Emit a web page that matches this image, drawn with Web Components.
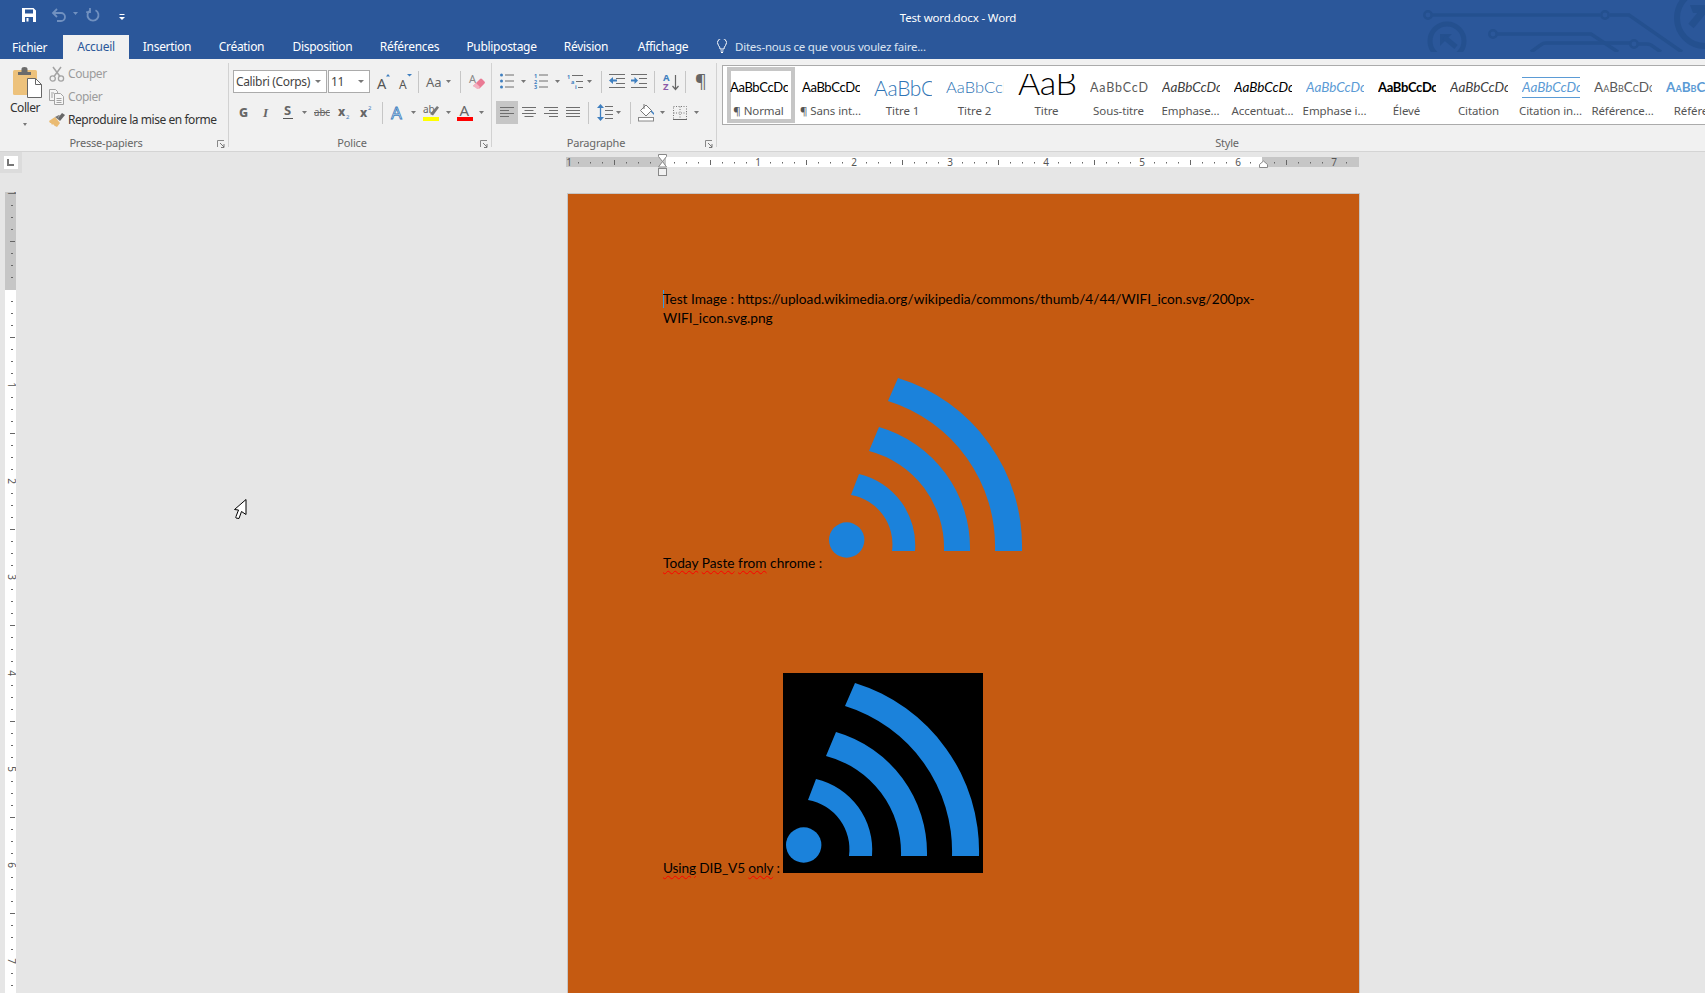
<!DOCTYPE html>
<html lang="fr"><head><meta charset="utf-8"><title>Test word.docx - Word</title>
<style>html,body{margin:0;height:100%;overflow:hidden;background:#e6e6e6}</style></head>
<body>
<word-app>
  <title-bar slot="title">Test word.docx - Word</title-bar>
  <ribbon-tabs slot="tabs">
    <ribbon-tab w="63" pad="12" first>Fichier</ribbon-tab>
    <ribbon-tab w="66" active>Accueil</ribbon-tab>
    <ribbon-tab w="76">Insertion</ribbon-tab>
    <ribbon-tab w="73">Création</ribbon-tab>
    <ribbon-tab w="89">Disposition</ribbon-tab>
    <ribbon-tab w="85">Références</ribbon-tab>
    <ribbon-tab w="99">Publipostage</ribbon-tab>
    <ribbon-tab w="70">Révision</ribbon-tab>
    <ribbon-tab w="84">Affichage</ribbon-tab>
    <tell-me>Dites-nous ce que vous voulez faire...</tell-me>
  </ribbon-tabs>
  <word-ribbon slot="ribbon">
    <rb-group w="229" label="Presse-papiers">
      <clip-board></clip-board>
    </rb-group>
    <rb-group w="263" label="Police">
      <rb-rows>
        <rb-row>
          <rb-combo m="4" w="94">Calibri (Corps)</rb-combo><rb-combo m="1" w="42">11</rb-combo>
          <rb-icon n="grow" m="7"></rb-icon><rb-icon n="shrink" m="8"></rb-icon><rb-sep m="6"></rb-sep>
          <rb-icon n="case" m="7"></rb-icon><rb-icon n="arr" m="3.5"></rb-icon><rb-sep m="9.5"></rb-sep><rb-icon n="eraser" m="8"></rb-icon>
        </rb-row>
        <rb-row>
          <rb-icon n="bold" m="8"></rb-icon><rb-icon n="ital" m="11"></rb-icon><rb-icon n="under" m="10"></rb-icon><rb-icon n="arr" m="7.5"></rb-icon>
          <rb-icon n="strike" m="7.5"></rb-icon><rb-icon n="sub" m="8"></rb-icon><rb-icon n="sup" m="10"></rb-icon><rb-sep m="10"></rb-sep>
          <rb-icon n="effect" m="8"></rb-icon><rb-icon n="arr" m="6.5"></rb-icon><rb-icon n="hilite" m="7.5"></rb-icon><rb-icon n="arr" m="6.5"></rb-icon>
          <rb-icon n="fcolor" m="6.5"></rb-icon><rb-icon n="arr" m="5.5"></rb-icon>
        </rb-row>
      </rb-rows>
    </rb-group>
    <rb-group w="225" label="Paragraphe">
      <rb-rows>
        <rb-row>
          <rb-icon n="bullets" m="8"></rb-icon><rb-icon n="arr" m="7"></rb-icon><rb-icon n="numbers" m="8"></rb-icon><rb-icon n="arr" m="7"></rb-icon>
          <rb-icon n="multi" m="7"></rb-icon><rb-icon n="arr" m="4"></rb-icon><rb-sep m="9"></rb-sep>
          <rb-icon n="outdent" m="7"></rb-icon><rb-icon n="indent" m="6"></rb-icon><rb-sep m="7"></rb-sep>
          <rb-icon n="sort" m="8"></rb-icon><rb-sep m="6"></rb-sep><rb-icon n="pilcrow" m="9"></rb-icon>
        </rb-row>
        <rb-row>
          <rb-icon n="aleft" m="4" on></rb-icon><rb-icon n="acenter" m="4"></rb-icon><rb-icon n="aright" m="8"></rb-icon><rb-icon n="ajust" m="8"></rb-icon><rb-sep m="8"></rb-sep>
          <rb-icon n="spacing" m="8"></rb-icon><rb-icon n="arr" m="3"></rb-icon><rb-sep m="9"></rb-sep>
          <rb-icon n="fill" m="7"></rb-icon><rb-icon n="arr" m="5"></rb-icon><rb-icon n="borders" m="8"></rb-icon><rb-icon n="arr" m="7"></rb-icon>
        </rb-row>
      </rb-rows>
    </rb-group>
    <rb-group w="1036" label="Style" plain>
      <style-gallery>
        <style-item label="¶ Normal" selected s="color:#000;font-size:13px;letter-spacing:-.35px">AaBbCcDc</style-item>
        <style-item label="¶ Sans int..." s="color:#000;font-size:13px;letter-spacing:-.35px">AaBbCcDc</style-item>
        <style-item label="Titre 1" s="color:#2e74b5;font-size:21px;font-weight:300;letter-spacing:-.3px">AaBbCc</style-item>
        <style-item label="Titre 2" s="color:#2e74b5;font-size:16.500px;font-weight:300">AaBbCcD</style-item>
        <style-item label="Titre" s="color:#000;font-size:34px;font-weight:300;line-height:16px;letter-spacing:-.5px">AaB</style-item>
        <style-item label="Sous-titre" s="color:#5a5a5a;font-size:12.500px;letter-spacing:.8px">AaBbCcD</style-item>
        <style-item label="Emphase..." s="color:#404040;font-size:13.500px;font-style:italic">AaBbCcDc</style-item>
        <style-item label="Accentuat..." s="color:#000;font-size:13.500px;font-style:italic">AaBbCcDc</style-item>
        <style-item label="Emphase i..." s="color:#5b9bd5;font-size:13.500px;font-style:italic">AaBbCcDc</style-item>
        <style-item label="Élevé" s="color:#000;font-size:13px;font-weight:700;letter-spacing:-.35px">AaBbCcDc</style-item>
        <style-item label="Citation" s="color:#404040;font-size:13.500px;font-style:italic">AaBbCcDc</style-item>
        <style-item label="Citation in..." lines s="color:#5b9bd5;font-size:13.500px;font-style:italic">AaBbCcDc</style-item>
        <style-item label="Référence..." s="color:#5a5a5a;font-size:13.500px;font-variant:small-caps">AaBbCcDc</style-item>
        <style-item label="Référen" s="color:#5b9bd5;font-size:13.500px;font-variant:small-caps;font-weight:700">AaBbCcDc</style-item>
      </style-gallery>
    </rb-group>
  </word-ribbon>
  <doc-area slot="doc">
    <doc-page>
      <doc-para><text-caret></text-caret>Test Image : https://upload.wikimedia.org/wikipedia/commons/thumb/4/44/WIFI_icon.svg/200px-WIFI_icon.svg.png</doc-para>
      <doc-para gap="41"><spell-err>Today</spell-err> <spell-err>Paste</spell-err> <spell-err>from</spell-err> chrome : <wifi-image></wifi-image></doc-para>
      <doc-para gap="101" ls="-.15"><spell-err>Using</spell-err> DIB_V5 <spell-err>only</spell-err> : <wifi-image black></wifi-image></doc-para>
    </doc-page>
  </doc-area>
</word-app>
<script>
const UI='"Noto Sans","Open Sans",sans-serif';
const DOC='Lato,"Liberation Sans",sans-serif';
const mk=(el,css,html)=>{const r=el.attachShadow({mode:'open'});r.innerHTML=`<style>${css}</style>${html}`;return r};
const G='#6e6e6e',B='#3f7fbf';
const hl=(x1,x2,ys,c=G,sw=1)=>ys.map(y=>`<path d="M${x1} ${y+.5}H${x2}" stroke="${c}" stroke-width="${sw}"/>`).join('');
const lr=(x1,x2,rows)=>rows.map(([a,b,y])=>`<path d="M${a} ${y+.5}H${b}" stroke="${G}"/>`).join('');
const tx=(x,y,s,t,extra='')=>`<text x="${x}" y="${y}" font-size="${s}" ${extra}>${t}</text>`;
const ICONS={
 arr:[5,3,`<path d="M0 0h5L2.500 3z" fill="#777"/>`],
 grow:[14,18,`<path d="M9 3.500L11 1l2 2.500z" fill="${B}"/>`+tx(0,16,14.500,'A','fill="#555"')],
 shrink:[13,18,`<path d="M8 1h5l-2.500 2.500z" fill="${B}"/>`+tx(0,16,12,'A','fill="#555"')],
 case:[16,18,tx(0,14,13,'Aa','fill="#666"')],
 eraser:[16,18,tx(0,10,11,'A','fill="#888"')+`<path d="M4 13l7-7q1-1 2 0l2.500 2.500q1 1 0 2l-4.500 4.500q-1 1-2 0l-5-2z" fill="#ea7a94"/><path d="M4 13l3-3 4 4-1.500 1.500q-1 1-2 0z" fill="#f3b2c2"/>`],
 bold:[12,16,tx(2,12,12.500,'G','fill="#666" font-weight="800"')],
 ital:[12,16,tx(3,12,13,'I','fill="#666" font-style="italic" font-family="Liberation Serif" font-weight="700"')],
 under:[12,18,tx(2,11,13,'S','fill="#666" font-weight="700"')+`<path d="M1 14.500h10" stroke="#555"/>`],
 strike:[16,16,tx(0,11,11,'abc','fill="#666" textLength="16" lengthAdjust="spacingAndGlyphs"')+`<path d="M0 7.500h16" stroke="#666"/>`],
 sub:[12,16,tx(0,11,12,'x','fill="#666" font-weight="800"')+tx(8,14,6,'2',`fill="${B}"`)],
 sup:[12,16,tx(0,12,12,'x','fill="#666" font-weight="800"')+tx(8,5,6,'2',`fill="${B}"`)],
 effect:[13,18,tx(0,15,17,'A',`fill="#e6eff8" stroke="${B}" stroke-width=".8"`)],
 hilite:[16,18,tx(0,9,10,'ab','fill="#666"')+`<path d="M7 10L14 2l2 1.500-6 8z" fill="#777"/><rect y="13" width="16" height="4" fill="#ff0"/>`],
 fcolor:[16,18,tx(2.500,12,15,'A','fill="#666"')+`<rect y="13" width="16" height="4" fill="#f00"/>`],
 bullets:[14,15,[1,7,13].map(y=>`<circle cx="1.500" cy="${y}" r="1.500" fill="${B}"/>`).join('')+hl(5,14,[0.500,6.500,12.500])],
 numbers:[14,15,tx(0,4,5.500,'1',`fill="${B}" font-weight="700"`)+tx(0,10,5.500,'2',`fill="${B}" font-weight="700"`)+tx(0,15,5.500,'3',`fill="${B}" font-weight="700"`)+hl(5,14,[0.500,6.500,12.500])],
 multi:[16,15,tx(0,5,5.500,'1',`fill="${B}" font-weight="700"`)+tx(4,10,5.500,'a',`fill="${B}" font-weight="700"`)+tx(8,15,5.500,'i',`fill="${B}" font-weight="700"`)+lr(0,0,[[5,16,1],[9,16,7],[11,16,13]])],
 outdent:[16,15,lr(0,0,[[0,16,0],[7,16,4],[7,16,9],[0,16,13]])+`<path d="M0 6.500L4 3v2.500h4v2H4V10z" fill="${B}"/>`],
 indent:[16,15,lr(0,0,[[0,16,0],[8,16,4],[8,16,9],[0,16,13]])+`<path d="M7 6.500L3.500 3v2.500H0v2h3.500V10z" fill="${B}"/>`],
 sort:[16,18,tx(0,8,9.500,'A',`fill="${B}" font-weight="700"`)+tx(0,17,9.500,'Z','fill="#8a5aa8" font-weight="700"')+`<path d="M12.500 2v14M9.500 13l3 3.500 3-3.500" fill="none" stroke="#666" stroke-width="1.200"/>`],
 pilcrow:[12,20,tx(0,16,18,'¶','fill="#666"')],
 aleft:[14,11,lr(0,0,[[0,14,0],[0,9,3],[0,14,6],[0,9,9]])],
 acenter:[14,11,lr(0,0,[[0,14,0],[2.500,11.500,3],[0,14,6],[2.500,11.500,9]])],
 aright:[14,11,lr(0,0,[[0,14,0],[5,14,3],[0,14,6],[5,14,9]])],
 ajust:[14,11,lr(0,0,[[0,14,0],[0,14,3],[0,14,6],[0,14,9]])],
 spacing:[16,17,`<path d="M3.500 3v11" stroke="${B}" stroke-width="1.300"/><path d="M0 4L3.500 0 7 4zM0 13l3.500 4L7 13z" fill="${B}"/>`+lr(0,0,[[8,16,2],[8,16,6],[8,16,10],[8,16,14]])],
 fill:[17,18,`<path d="M8 1l5.500 5.500L8 12 2.500 6.500z" fill="#fff" stroke="#777"/><path d="M13 6l3 3v2l-3-3z" fill="${B}"/><path d="M6 0v5" stroke="#777"/><rect x=".5" y="13.500" width="15" height="3.500" fill="#fff" stroke="#888"/>`],
 borders:[14,14,`<path d="M.5 .5h13v13H.5zM7 .5v13M.5 7h13" fill="none" stroke="#777" stroke-dasharray="1 1.500"/><path d="M0 13.500h14" stroke="#666"/>`],
};
class RbIcon extends HTMLElement{connectedCallback(){const n=this.getAttribute('n');const [w,h,c]=ICONS[n];const on=this.hasAttribute('on');
 mk(this,`:host{display:flex;flex:none;align-items:center;justify-content:center;font-family:${UI}}
 .on{background:#c6c6c6;width:22px;height:23px;display:flex;align-items:center;justify-content:center}svg{display:block;overflow:visible}`,
 `<div class="${on?'on':''}"><svg width="${w}" height="${h}" viewBox="0 0 ${w} ${h}">${c}</svg></div>`);
 this.style.marginLeft=(this.getAttribute('m')||0)+'px';}}
customElements.define('rb-icon',RbIcon);
class RbSep extends HTMLElement{connectedCallback(){mk(this,`:host{display:block;flex:none;width:1px;height:22px;background:#c6c6c6}`,'');this.style.marginLeft=this.getAttribute('m')+'px';}}
customElements.define('rb-sep',RbSep);
class RbRow extends HTMLElement{constructor(){super();mk(this,`:host{display:flex;align-items:center;height:23px}`,'<slot></slot>')}}
customElements.define('rb-row',RbRow);
class RbRows extends HTMLElement{constructor(){super();mk(this,`:host{display:flex;flex-direction:column;gap:8px;padding-top:7px}`,'<slot></slot>')}}
customElements.define('rb-rows',RbRows);
class RbCombo extends HTMLElement{connectedCallback(){mk(this,`:host{display:flex;flex:none;box-sizing:border-box;align-items:center;justify-content:space-between;height:23px;background:#fff;border:1px solid #ababab;padding:0 5px 0 2px;font:12px ${UI};color:#444;letter-spacing:-.35px}
 i{width:0;height:0;border:3px solid transparent;border-top:3px solid #777;border-bottom:0;display:block}`,`<slot></slot><i></i>`);
 this.style.width=this.getAttribute('w')+'px';this.style.marginLeft=this.getAttribute('m')+'px';}}
customElements.define('rb-combo',RbCombo);
class RbGroup extends HTMLElement{connectedCallback(){const plain=this.hasAttribute('plain');
 mk(this,`:host{display:flex;flex:none;flex-direction:column;box-sizing:border-box;height:84px;margin-top:4px;${plain?'':'border-right:1px solid #d2d2d2;'}}
 .c{flex:1;min-height:0}
 .f{display:grid;grid-template-columns:1fr 16px;height:16px;margin-bottom:-4px;font:11px/16px ${UI};color:#666;letter-spacing:-.2px}
 .l{text-align:center}
 svg{display:block;margin:5px 0 0 5px}`,
 `<div class="c"><slot></slot></div><div class="f"><div class="l">${this.getAttribute('label')}</div>${plain?'':`<svg width="8" height="8" viewBox="0 0 8 8"><path d="M.5 7V.5H7" fill="none" stroke="#888"/><path d="M3 3l4 4M7 4v3.500H4" fill="none" stroke="#777"/></svg>`}</div>`);
 this.style.width=this.getAttribute('w')+'px';}}
customElements.define('rb-group',RbGroup);
class ClipBoard extends HTMLElement{constructor(){super();mk(this,`:host{display:flex;height:69px;font:12px ${UI};letter-spacing:-.45px}
 .p{width:49px;flex:none;display:flex;flex-direction:column;align-items:center;padding-top:4px;box-sizing:border-box;color:#333}
 .p span{margin-top:2px;line-height:16px;margin-left:1px}
 .p i{display:block;width:0;height:0;border:2.500px solid transparent;border-top:3px solid #777;border-bottom:0;margin-top:7px;margin-left:1px}
 .p svg{display:block;margin-left:5px}
 .rs{margin-top:-1px}
 .r{display:flex;align-items:center;height:23px;gap:3px;white-space:nowrap;color:#333}
 .r.d{color:#9c9c9c}.r svg{display:block;flex:none}`,
 `<div class="p"><svg width="29" height="31" viewBox="0 0 29 31"><rect x="0" y="3" width="24" height="25" rx="1.500" fill="#edc27c"/><path d="M5 8V5h3.500V2q0-2 3-2t3 2v3H18v3z" fill="#6b6b6b"/><path d="M14.500 11.500h8l6 6v13h-14z" fill="#fff" stroke="#666"/><path d="M22.500 11.500v6h6" fill="none" stroke="#666"/></svg><span>Coller</span><i></i></div>
 <div class="rs"><div class="r d"><svg width="16" height="16" viewBox="0 0 16 16" fill="none" stroke="#a3a3a3" stroke-width="1.300"><circle cx="3.700" cy="12.500" r="2.600"/><circle cx="12" cy="12.500" r="2.600"/><path d="M5 10.500L12 1M11 10.500L4 1" stroke-width="1.500"/></svg><span>Couper</span></div>
 <div class="r d"><svg width="16" height="16" viewBox="0 0 16 16" fill="#f6f6f6" stroke="#a3a3a3"><path d="M.5 .5h6l2 2v9h-8z"/><path d="M5.500 4.500h6l3 3v8h-9z"/><path d="M7.500 9.500h5M7.500 11.500h5M7.500 13.500h5M2 4h3M2 6h2M2 8h2"/></svg><span>Copier</span></div>
 <div class="r"><svg width="16" height="16" viewBox="0 0 16 16"><path d="M0 9l6-4 5 6-3 4q-3-1-4-3l-1 1-1-2-1 0z" fill="#eabb72"/><path d="M6 5l4-2 1 1-2 1 2 4z" fill="#777"/><path d="M9 6l4-5 3 2-5 6z" fill="#666"/></svg><span>Reproduire la mise en forme</span></div></div>`)}}
customElements.define('clip-board',ClipBoard);
class StyleGallery extends HTMLElement{constructor(){super();mk(this,`:host{display:flex;box-sizing:border-box;margin:2px 0 0 5px;height:60px;background:#fff;border:1px solid #ababab;padding-left:1px;overflow:hidden}`,'<slot></slot>')}}
customElements.define('style-gallery',StyleGallery);
class StyleItem extends HTMLElement{connectedCallback(){const sel=this.hasAttribute('selected'),ln=this.hasAttribute('lines');
 mk(this,`:host{display:block;flex:none;width:72px;box-sizing:border-box;padding:1px 1px 1px 3px;font-family:${DOC}}
 .b{box-sizing:border-box;height:56px;border:4px solid ${sel?'#c6c6c6':'transparent'};display:flex;flex-direction:column}
 .s{box-sizing:border-box;width:58px;height:27px;margin:3px 0 0 -1px;overflow:hidden;white-space:nowrap;line-height:27px;flex:none}
 .t{font:11.500px/16px ${UI};color:#555;text-align:center;white-space:nowrap;margin:2px 0 0 -6.500px;width:68px;letter-spacing:-.1px}`,
 `<div class="b"><div class="s" style="${this.getAttribute('s')}${ln?';border-top:1px solid #5b9bd5;border-bottom:1px solid #5b9bd5;margin-top:6px;margin-bottom:3px;height:21px;line-height:19px':''}"><slot></slot></div><div class="t">${this.getAttribute('label')}</div></div>`);}}
customElements.define('style-item',StyleItem);
class WordApp extends HTMLElement{constructor(){super();mk(this,`:host{display:flex;flex-direction:column;width:1705px;height:993px;overflow:hidden;background:#e6e6e6;position:relative}`,
 `<slot name="title"></slot><slot name="tabs"></slot><slot name="ribbon"></slot><slot name="doc"></slot>`)}}
customElements.define('word-app',WordApp);
class TitleBar extends HTMLElement{constructor(){super();mk(this,`:host{display:flex;flex:none;height:35px;background:#2b579a;position:relative;color:#fff;font:11.500px ${UI};letter-spacing:-.15px}
 .q{display:flex;align-items:flex-start;padding:8px 0 0 22px}.q svg{display:block;flex:none}
 .t{position:absolute;left:758px;width:400px;top:10px;text-align:center;line-height:16px}
 .c{position:absolute;left:1300px;top:0}`,
 `<div class="q"><svg width="14" height="14" viewBox="0 0 14 14"><path fill="#fff" fill-rule="evenodd" d="M0 0h11.500L14 2.500V14H0zM3 1.500v4h8v-4zM3 9v5h8V9z"/><rect x="4.500" y="10" width="2" height="3.500" fill="#fff"/></svg>
 <svg style="margin-left:15px" width="15" height="14" viewBox="0 0 15 14" fill="none" stroke="#7191c0" stroke-width="1.800"><path d="M6 1L2 5l4 4M2 5h8a4 4 0 010 8H6"/></svg>
 <svg style="margin:4px 0 0 7px" width="5" height="3"><path d="M0 0h5L2.500 3z" fill="#7191c0"/></svg>
 <svg style="margin-left:8px" width="14" height="14" viewBox="0 0 14 14" fill="none" stroke="#7191c0" stroke-width="1.800"><path d="M9.500 2.200a5.500 5.500 0 11-5 0"/><path d="M4 0v4.200H.2"/></svg>
 <svg style="margin:6px 0 0 19px" width="6" height="6" viewBox="0 0 6 6"><path d="M.5 .5h5" stroke="#fff"/><path d="M0 3h6L3 6z" fill="#fff"/></svg></div>
 <div class="t"><slot></slot></div>
 <svg class="c" width="405" height="52" viewBox="0 0 405 52" fill="none" stroke="#24508f" stroke-width="3.500">
 <circle cx="128" cy="15" r="3.700" stroke-width="2.500"/><path d="M132 15H300"/><circle cx="305" cy="15" r="3.700" stroke-width="2.500"/><path d="M310 15h19l53 37"/>
 <circle cx="193" cy="34" r="3.700" stroke-width="2.500"/><path d="M197 34h94l27 18"/>
 <path d="M231 52l11-8q2-1 4-1h85"/><circle cx="334" cy="44" r="3.700" stroke-width="2.500"/><path d="M338 44h9q2 0 4 1l10 7"/>
 <circle cx="147" cy="41" r="17" stroke-width="5"/><path d="M140 46V34h12z" fill="#24508f" stroke="none"/><path d="M144 37l12 10" stroke-width="5"/>
 <circle cx="405" cy="18" r="28" stroke-width="6"/><path d="M390 5h15v8h-12zM405 8l-16 19" stroke-width="0" fill="#24508f"/><path d="M405 9l-14 17" stroke-width="7"/></svg>`)}}
customElements.define('title-bar',TitleBar);
class RibbonTabs extends HTMLElement{constructor(){super();mk(this,`:host{display:flex;flex:none;height:24px;background:#2b579a}`,'<slot></slot>')}}
customElements.define('ribbon-tabs',RibbonTabs);
class RibbonTab extends HTMLElement{connectedCallback(){const a=this.hasAttribute('active'),f=this.hasAttribute('first');
 mk(this,`:host{display:flex;flex:none;box-sizing:border-box;justify-content:${f?'flex-start':'center'};padding-left:${this.getAttribute('pad')||0}px;padding-bottom:${f?0:2}px;align-items:center;height:24px;font:12px ${UI};letter-spacing:-.3px;color:${a?'#2b579a':'#fff'};background:${a?'#f1f1f1':'transparent'}}`,'<slot></slot>');
 this.style.width=this.getAttribute('w')+'px';}}
customElements.define('ribbon-tab',RibbonTab);
class TellMe extends HTMLElement{constructor(){super();mk(this,`:host{display:flex;align-items:center;gap:8px;margin-left:12px;padding-bottom:2px;font:11.500px ${UI};color:#dbe4f1;letter-spacing:-.22px;white-space:nowrap}svg{display:block}`,
 `<svg width="10" height="14" viewBox="0 0 10 14" fill="none" stroke="#fff"><path d="M3 10q0-2-1.500-3.500a4.500 4.500 0 117 0Q7 8 7 10zM3.500 12h3M4 13.500h2"/></svg><slot></slot>`)}}
customElements.define('tell-me',TellMe);
class WordRibbon extends HTMLElement{constructor(){super();mk(this,`:host{display:flex;flex:none;box-sizing:border-box;height:93px;background:#f1f1f1;border-bottom:1px solid #d4d4d4;overflow:hidden}`,'<slot></slot>')}}
customElements.define('word-ribbon',WordRibbon);
class HRuler extends HTMLElement{constructor(){super();let t='';
 for(let i=-8;i<=57;i++){const x=96+i*12;if(x>=792)continue;
  if(i%8===0){if(i!==0)t+=`<text x="${x<2?3:x}" y="12" font-size="10" text-anchor="middle" fill="#555">${Math.abs(i/8)}</text>`}
  else if(i%4===0)t+=`<rect x="${x}" y="6" width="1" height="5" fill="#666"/>`;
  else t+=`<rect x="${x}" y="8" width="1" height="1.500" fill="#666"/>`;}
 mk(this,`:host{display:block;flex:none;height:24px;width:793px;margin-left:-1px;font-family:${UI}}svg{display:block;overflow:visible}`,
 `<svg width="793" height="24" viewBox="0 0 793 24"><rect y="3" width="793" height="10" fill="#c6c6c6"/><rect x="100" y="3" width="596" height="10" fill="#fff"/>${t}
 <path d="M92.500 .5h8v2l-4 5 4 5.500H92.500l4-5.500-4-5z" fill="#fff" stroke="#888"/><rect x="92.500" y="14.500" width="8" height="7" fill="#f1f1f1" stroke="#888"/>
 <path d="M693.500 13.500v-3l4-3.500 4 3.500v3z" fill="#fff" stroke="#888"/></svg>`)}}
customElements.define('h-ruler',HRuler);
class VRuler extends HTMLElement{constructor(){super();let t='';
 for(let i=-8;i<=60;i++){const y=97+i*12;
  if(i%8===0){if(i!==0)t+=`<text transform="translate(3 ${y}) rotate(90)" font-size="10" text-anchor="middle" fill="#555">${Math.abs(i/8)}</text>`}
  else if(i%4===0)t+=`<rect x="5" y="${y}" width="5" height="1" fill="#666"/>`;
  else t+=`<rect x="6" y="${y}" width="2" height="1" fill="#666"/>`;}
 mk(this,`:host{display:block;width:11px;margin:19px 0 0 5px;font-family:${UI}}svg{display:block}`,
 `<svg width="11" height="810" viewBox="0 0 11 810"><rect width="11" height="810" fill="#fff"/><rect width="11" height="98" fill="#c6c6c6"/>${t}</svg>`)}}
customElements.define('v-ruler',VRuler);
class DocArea extends HTMLElement{constructor(){super();mk(this,`:host{display:flex;flex:1;min-height:0;position:relative;background:#e6e6e6}
 .l{width:22px;flex:none}.k{width:22px;height:21px;background:#dcdcdc;box-sizing:border-box;padding:4px}
 .k svg{display:block}
 .m{margin-left:545px;padding-top:2px;display:flex;flex-direction:column;align-items:flex-start}
 .gap{height:15px;flex:none}
 .cur{position:absolute;left:234px;top:347px}`,
 `<div class="l"><div class="k"><svg width="14" height="13" viewBox="0 0 14 13"><rect width="14" height="13" fill="#fff"/><path d="M4 3v6h6" fill="none" stroke="#777" stroke-width="2"/></svg></div><v-ruler></v-ruler></div>
 <div class="m"><h-ruler></h-ruler><div class="gap"></div><slot></slot></div>
 <svg class="cur" width="13" height="21" viewBox="0 0 13 21"><path d="M12 .5V15.500L7.500 12.500 5 19.500 2 19q-.5-.5 0-1.500L4.500 11 .5 10.500z" fill="#fff" stroke="#000"/></svg>`)}}
customElements.define('doc-area',DocArea);
class DocPage extends HTMLElement{constructor(){super();mk(this,`:host{display:block;flex:none;box-sizing:border-box;width:793px;height:1123px;background:#c55a11;border:1px solid #c6c6c6;padding:95px 96px 0 95px;font:13.700px/19px ${DOC};color:#000}`,'<slot></slot>')}}
customElements.define('doc-page',DocPage);
class DocPara extends HTMLElement{connectedCallback(){mk(this,`:host{display:block}`,'<slot></slot>');this.style.marginTop=(this.getAttribute('gap')||0)+'px';const l=this.getAttribute('ls');if(l)this.style.letterSpacing=l+'px';}}
customElements.define('doc-para',DocPara);
class SpellErr extends HTMLElement{constructor(){super();mk(this,`:host{text-decoration:underline wavy #f00 1px;text-underline-offset:2px}`,'<slot></slot>')}}
customElements.define('spell-err',SpellErr);
class TextCaret extends HTMLElement{constructor(){super();mk(this,`:host{display:inline-block;width:1px;height:18px;margin-right:-1px;background:#2f9be8;vertical-align:-4px}`,'')}}
customElements.define('text-caret',TextCaret);
class WifiImage extends HTMLElement{connectedCallback(){const k=this.hasAttribute('black');
 mk(this,`:host{display:inline-block;width:200px;height:200px;${k?'background:#000;':''}}svg{display:block}`,
 `<svg width="200" height="200" viewBox="0 0 200 200" fill="#1b82db"><circle cx="20.700" cy="172" r="17.700"/>
 <path d="M72 10A176 176 0 0 1 196 183H169A152 152 0 0 0 62 33Z"/><path d="M53 59A126 126 0 0 1 144 183H118A100 100 0 0 0 43 83Z"/><path d="M33 106A73 73 0 0 1 89 183H66A50 50 0 0 0 25 127Z"/></svg>`)}}
customElements.define('wifi-image',WifiImage);
</script>
</body></html>
